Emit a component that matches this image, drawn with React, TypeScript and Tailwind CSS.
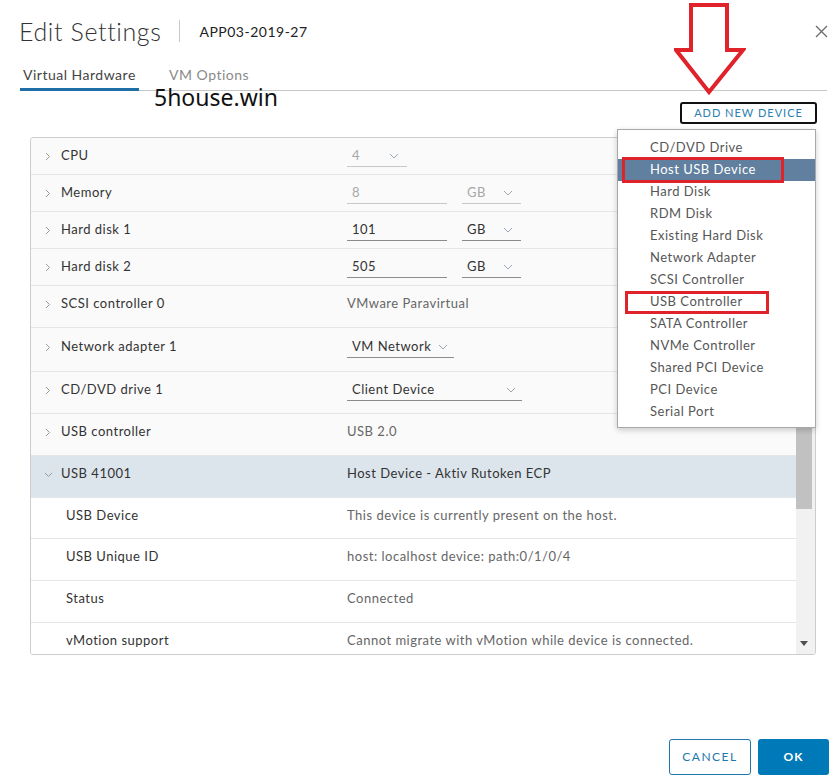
import React from "react";

const Chevron = ({ open }: { open?: boolean }) =>
  open ? (
    <svg width="9" height="6" viewBox="0 0 9 6" className="block">
      <polyline points="1,1 4.5,4.5 8,1" fill="none" stroke="#9a9a9a" strokeWidth="1" />
    </svg>
  ) : (
    <svg width="6" height="9" viewBox="0 0 6 9" className="block">
      <polyline points="1,1 4.5,4.5 1,8" fill="none" stroke="#9a9a9a" strokeWidth="1" />
    </svg>
  );

const Caret = () => (
  <svg width="10" height="6" viewBox="0 0 10 6" className="block">
    <polyline points="1,1 5,5 9,1" fill="none" stroke="#9aa7b3" strokeWidth="1" />
  </svg>
);

const Field = ({
  text,
  w,
  disabled,
  caret,
  caretRight = 8,
}: {
  text: string;
  w: number;
  disabled?: boolean;
  caret?: boolean;
  caretRight?: number;
}) => (
  <div
    className={
      "flex items-center h-[22px] border-b pl-[5px] " +
      (disabled ? "border-[#c8c8c8] text-[#a8a8a8]" : "border-[#8c8c8c] text-[#333]")
    }
    style={{ width: w, paddingRight: caretRight }}
  >
    <span className="flex-1">{text}</span>
    {caret && <Caret />}
  </div>
);

type Row = {
  label: string;
  h: number;
  value?: React.ReactNode;
  sub?: boolean;
  open?: boolean;
  tall?: boolean;
};

const rows: Row[] = [
  { label: "CPU", h: 37, value: <Field text="4" w={60} disabled caret caretRight={8} /> },
  {
    label: "Memory",
    h: 37,
    value: (
      <div className="flex gap-[15px]">
        <Field text="8" w={100} disabled />
        <Field text="GB" w={59} disabled caret />
      </div>
    ),
  },
  {
    label: "Hard disk 1",
    h: 37,
    value: (
      <div className="flex gap-[15px]">
        <Field text="101" w={100} />
        <Field text="GB" w={59} caret />
      </div>
    ),
  },
  {
    label: "Hard disk 2",
    h: 37,
    value: (
      <div className="flex gap-[15px]">
        <Field text="505" w={100} />
        <Field text="GB" w={59} caret />
      </div>
    ),
  },
  { label: "SCSI controller 0", h: 42, tall: true, value: <span className="text-[#666]">VMware Paravirtual</span> },
  { label: "Network adapter 1", h: 44, tall: true, value: <Field text="VM Network" w={107} caret caretRight={6} /> },
  { label: "CD/DVD drive 1", h: 42, tall: true, value: <Field text="Client Device" w={175} caret caretRight={6} /> },
  { label: "USB controller", h: 42, tall: true, value: <span className="text-[#666]">USB 2.0</span> },
  { label: "USB 41001", h: 42, tall: true, open: true, value: <span className="text-[#333]">Host Device - Aktiv Rutoken ECP</span> },
  { label: "USB Device", h: 41, tall: true, sub: true, value: <span className="text-[#666]">This device is currently present on the host.</span> },
  { label: "USB Unique ID", h: 42, tall: true, sub: true, value: <span className="text-[#666]">host: localhost device: path:0/1/0/4</span> },
  { label: "Status", h: 42, tall: true, sub: true, value: <span className="text-[#666]">Connected</span> },
  { label: "vMotion support", h: 42, tall: true, sub: true, value: <span className="text-[#666]">Cannot migrate with vMotion while device is connected.</span> },
];

const menu = [
  "CD/DVD Drive",
  "Host USB Device",
  "Hard Disk",
  "RDM Disk",
  "Existing Hard Disk",
  "Network Adapter",
  "SCSI Controller",
  "USB Controller",
  "SATA Controller",
  "NVMe Controller",
  "Shared PCI Device",
  "PCI Device",
  "Serial Port",
];

export default function App() {
  return (
    <div className="relative w-[837px] h-[782px] overflow-hidden bg-white font-['Lato',sans-serif] text-[13px] tracking-[0.5px] text-[#333]">
      {/* header */}
      <div className="flex items-center h-[28px] mt-[17px] pl-[19px] pr-[9px]">
        <span className="text-[25px] font-light leading-none text-[#333] tracking-[0.6px]">Edit Settings</span>
        <span className="w-px h-[22px] bg-[#c8c8c8] ml-[18px] mr-[19px]" />
        <span className="text-[14px] text-[#222] tracking-[0.5px]">APP03-2019-27</span>
        <span className="ml-auto">
          <svg width="13" height="13" viewBox="0 0 13 13" className="block">
            <path d="M1 1 L12 12 M12 1 L1 12" stroke="#6b6b6b" strokeWidth="1.3" />
          </svg>
        </span>
      </div>

      {/* tabs */}
      <div className="flex items-end h-[30px] mt-[16px] ml-[20px] mr-[10px] border-b border-[#c8c8c8]">
        <div className="w-[119px] pl-[3px] h-full flex items-center pb-[2px] border-b-[3px] border-[#1d6fa5] -mb-px text-[14px] text-[#444]">
          Virtual Hardware
        </div>
        <div className="ml-[30px] h-full flex items-center pb-[3px] text-[14px] text-[#8a8a8a]">VM Options</div>
      </div>

      {/* add new device */}
      <div className="flex justify-end mt-[11px] pr-[20px]">
        <div className="w-[137px] h-[22px] border-2 border-[#111] rounded-[3px] flex items-center justify-center text-[11px] tracking-[1px] text-[#2a7fb0]">
          ADD NEW DEVICE
        </div>
      </div>

      {/* table */}
      <div className="mt-[13px] ml-[30px] w-[786px] h-[518px] border border-[#cccccc] rounded-[3px] flex overflow-hidden">
        <div className="flex-1 flex flex-col overflow-hidden">
          {rows.map((r) => (
            <div
              key={r.label}
              className={
                "flex items-center shrink-0 border-b border-[#e6e6e6] " +
                (r.tall ? "pb-[5px] " : "") +
                (r.open ? "bg-[#dde5ec]" : r.sub ? "bg-white" : "bg-[#fafafa]")
              }
              style={{ height: r.h }}
            >
              <div className={"flex items-center shrink-0 " + (r.sub ? "w-[316px] pl-[35px]" : "w-[316px] pl-[13px]")}>
                {!r.sub && (
                  <span className={r.open ? "w-[17px] pt-[2px]" : "w-[17px] pl-[1px]"}>
                    <Chevron open={r.open} />
                  </span>
                )}
                <span className="text-[#333]">{r.label}</span>
              </div>
              <div className="flex-1">{r.value}</div>
            </div>
          ))}
        </div>
        {/* scrollbar */}
        <div className="w-[19px] bg-[#f1f1f1] flex flex-col">
          <div className="h-[371px] w-[16px] bg-[#c1c1c1]" />
          <div className="flex-1" />
          <div className="h-[22px] flex items-center justify-center pr-[4px]">
            <svg width="8" height="5" viewBox="0 0 8 5" className="block">
              <polygon points="0,0 8,0 4,5" fill="#505050" />
            </svg>
          </div>
        </div>
      </div>

      {/* footer buttons */}
      <div className="flex justify-end gap-[7px] mt-[84px] pr-[8px]">
        <div className="w-[82px] h-[36px] border border-[#1f78ad] rounded-[3px] flex items-center justify-center text-[12px] tracking-[1.5px] text-[#1f78ad]">
          CANCEL
        </div>
        <div className="w-[71px] h-[36px] bg-[#0079b8] rounded-[3px] flex items-center justify-center text-[12px] font-bold tracking-[1px] text-white">
          OK
        </div>
      </div>

      {/* watermark */}
      <div className="absolute left-[154px] top-[85px] font-['Noto_Sans',sans-serif] text-[23px] leading-[24px] tracking-normal text-[#111]">
        5house.win
      </div>

      {/* red arrow */}
      <svg className="absolute left-[674px] top-[3px]" width="72" height="93" viewBox="0 0 72 93">
        <polygon
          points="17,2 53,2 53,47 69,47 35,89 2,47 17,47"
          fill="none"
          stroke="#e0232b"
          strokeWidth="4"
          strokeLinejoin="miter"
        />
      </svg>

      {/* dropdown */}
      <div className="absolute left-[617px] top-[129px] w-[199px] bg-white border border-[#a8a8a8] shadow-[0_2px_6px_rgba(0,0,0,0.2)] pt-[7px] pb-[4px]">
        {menu.map((m) => (
          <div
            key={m}
            className={
              "h-[22px] flex items-center pl-[32px] " +
              (m === "Host USB Device" ? "bg-[#617f9e] text-white" : "text-[#565656]")
            }
          >
            {m}
          </div>
        ))}
      </div>

      {/* red highlight boxes */}
      <div className="absolute left-[622px] top-[157px] w-[162px] h-[26px] border-[3px] border-[#e0232b]" />
      <div className="absolute left-[625px] top-[291px] w-[144px] h-[23px] border-[3px] border-[#e0232b]" />
    </div>
  );
}
